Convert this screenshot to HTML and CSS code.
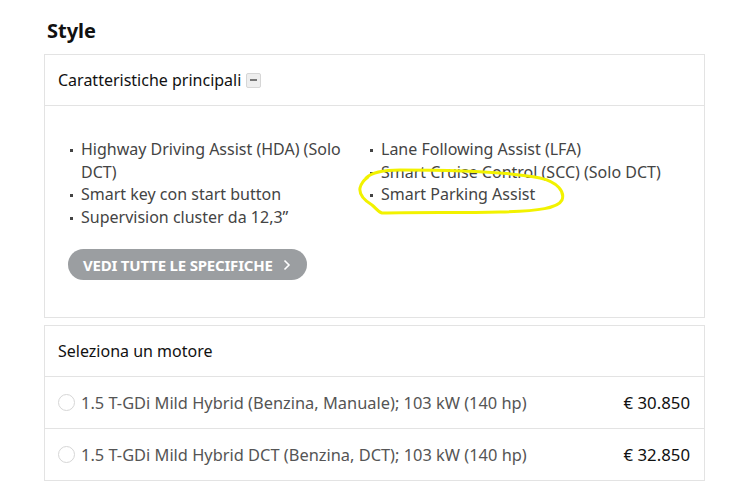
FILE: index.html
```html
<!DOCTYPE html>
<html lang="it">
<head>
<meta charset="utf-8">
<link rel="stylesheet" href="styles.css">
</head>
<body>
<div class="page">
  <h2 class="title">Style</h2>
  <section class="card">
    <div class="card-head">
      <span>Caratteristiche principali</span>
      <span class="toggle"><span class="minus"></span></span>
    </div>
    <div class="card-body">
      <div class="features">
        <ul class="feat-col">
          <li>Highway Driving Assist (HDA) (Solo DCT)</li>
          <li>Smart key con start button</li>
          <li>Supervision cluster da 12,3”</li>
        </ul>
        <ul class="feat-col">
          <li>Lane Following Assist (LFA)</li>
          <li>Smart Cruise Control (SCC) (Solo DCT)</li>
          <li>Smart Parking Assist</li>
        </ul>
      </div>
      <a class="btn">VEDI TUTTE LE SPECIFICHE <svg class="chev" width="8" height="12" viewBox="0 0 8 12"><path d="M1.5 1.5 L6 6 L1.5 10.5" fill="none" stroke="#fff" stroke-width="1.6"/></svg></a>
    </div>
  </section>
  <section class="card engines">
    <div class="card-head">Seleziona un motore</div>
    <div class="row">
      <span class="radio"></span>
      <span class="name">1.5 T-GDi Mild Hybrid (Benzina, Manuale); 103 kW (140 hp)</span>
      <span class="price">€ 30.850</span>
    </div>
    <div class="row">
      <span class="radio"></span>
      <span class="name">1.5 T-GDi Mild Hybrid DCT (Benzina, DCT); 103 kW (140 hp)</span>
      <span class="price">€ 32.850</span>
    </div>
  </section>
</div>
<svg class="scribble" width="733" height="498" viewBox="0 0 733 498">
  <path d="M366 178 C372 172 384 170 400 170 C450 170 510 172 540 178 C558 182 565 192 562 200 C558 208 540 211 500 212 C460 213 420 212 382 213 C378 212 376 208 372 205 C364 200 359 194 360 188 C361 183 364 180 368 177" fill="none" stroke="#f2f200" stroke-width="3" stroke-linecap="round" stroke-linejoin="round"/>
</svg>
</body>
</html>
```
FILE: styles.css
```css
html, body { margin: 0; padding: 0; background: #fff; }
body { font-family: "Noto Sans", "Open Sans", sans-serif; color: #222; width: 733px; height: 498px; overflow: hidden; position: relative; }
.page { padding: 18px 28px 0 44px; }
.title { margin: 0 0 10px 3px; font-size: 20px; font-weight: 700; line-height: 26px; color: #111; }
.card { border: 1px solid #e3e3e3; width: 659px; }
.card-head { height: 50px; border-bottom: 1px solid #e3e3e3; display: flex; align-items: center; gap: 5px; padding-left: 13px; font-size: 16px; color: #111; }
.toggle { width: 15px; height: 15px; border: 1px solid #d6d6d6; background: #eee; border-radius: 2px; display: flex; align-items: center; justify-content: center; box-sizing: border-box; }
.minus { width: 7px; height: 2px; background: #777; }
.card-body { padding: 32px 24px 37px 23px; }
.features { display: flex; font-size: 16px; line-height: 22.5px; color: #444; }
.feat-col { list-style: none; margin: 0; padding: 0; width: 300px; }
.feat-col li { position: relative; padding-left: 13px; }
.feat-col li::before { content: ""; position: absolute; left: 2px; top: 11px; width: 3px; height: 3px; background: #444; }
.btn { display: inline-flex; align-items: center; margin-top: 21px; height: 31px; padding: 0 16px 0 15px; border-radius: 16px; background: #9b9ea1; color: #fff; font-weight: 700; font-size: 15px; letter-spacing: -0.2px; }
.chev { margin-left: 10px; }
.engines { margin-top: 7px; }
.row { height: 51px; display: flex; align-items: center; padding: 0 14px; border-bottom: 1px solid #e3e3e3; font-size: 16.4px; }
.row:last-child { border-bottom: none; }
.radio { width: 15px; height: 15px; border: 1px solid #d6d6d6; border-radius: 50%; margin-right: 6px; margin-left: -1px; }
.name { flex: 1; color: #555; }
.price { color: #111; font-size: 16.8px; }
.scribble { position: absolute; left: 0; top: 0; pointer-events: none; }
```
